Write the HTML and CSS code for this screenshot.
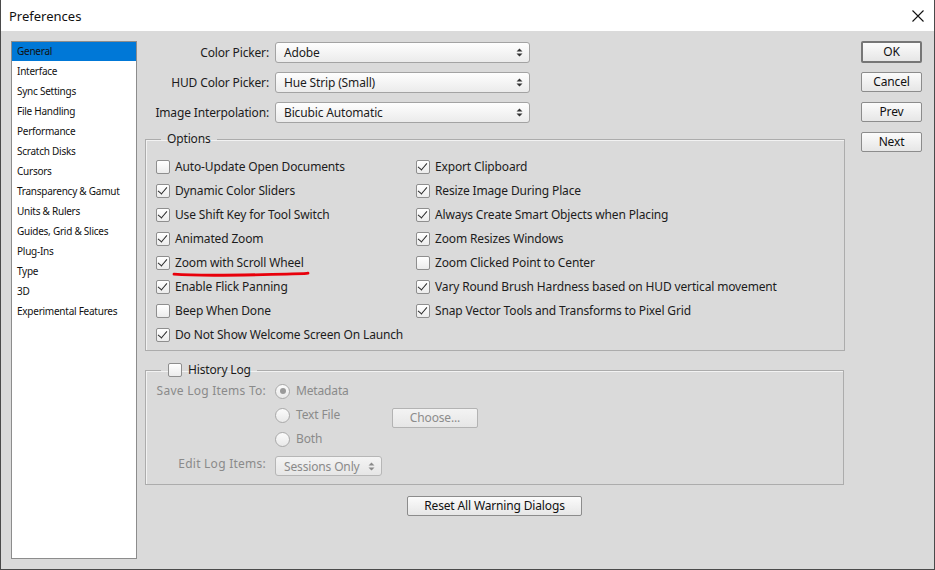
FILE: index.html
```html
<!DOCTYPE html>
<html>
<head>
<meta charset="utf-8">
<link rel="stylesheet" href="styles.css">
</head>
<body>
<div class="window">
  <div class="titlebar">
    <span class="title">Preferences</span>
    <svg class="close" width="12" height="12" viewBox="0 0 12 12"><path d="M0.5 0.5 L11.5 11.5 M11.5 0.5 L0.5 11.5" stroke="#111" stroke-width="1.1" fill="none"/></svg>
  </div>
  <div class="body">
    <ul class="nav">
      <li class="selected">General</li>
      <li>Interface</li>
      <li>Sync Settings</li>
      <li>File Handling</li>
      <li>Performance</li>
      <li>Scratch Disks</li>
      <li>Cursors</li>
      <li>Transparency &amp; Gamut</li>
      <li>Units &amp; Rulers</li>
      <li>Guides, Grid &amp; Slices</li>
      <li>Plug-Ins</li>
      <li>Type</li>
      <li>3D</li>
      <li>Experimental Features</li>
    </ul>

    <div class="main">
      <div class="top-grid">
        <span class="lbl">Color Picker:</span>
        <div class="select"><span>Adobe</span><svg class="arrows" width="7" height="9" viewBox="0 0 7 9"><path d="M3.5 0.5 L6.5 3.5 L0.5 3.5 Z M3.5 8.5 L6.5 5.5 L0.5 5.5 Z" fill="#333"/></svg></div>
        <span class="lbl">HUD Color Picker:</span>
        <div class="select"><span>Hue Strip (Small)</span><svg class="arrows" width="7" height="9" viewBox="0 0 7 9"><path d="M3.5 0.5 L6.5 3.5 L0.5 3.5 Z M3.5 8.5 L6.5 5.5 L0.5 5.5 Z" fill="#333"/></svg></div>
        <span class="lbl">Image Interpolation:</span>
        <div class="select"><span>Bicubic Automatic</span><svg class="arrows" width="7" height="9" viewBox="0 0 7 9"><path d="M3.5 0.5 L6.5 3.5 L0.5 3.5 Z M3.5 8.5 L6.5 5.5 L0.5 5.5 Z" fill="#333"/></svg></div>
      </div>

      <fieldset class="group options">
        <legend>Options</legend>
        <div class="opt-grid">
          <div class="opt"><span class="cb"></span><span class="txt">Auto-Update Open Documents</span></div>
          <div class="opt"><span class="cb on"></span><span class="txt">Dynamic Color Sliders</span></div>
          <div class="opt"><span class="cb on"></span><span class="txt">Use Shift Key for Tool Switch</span></div>
          <div class="opt"><span class="cb on"></span><span class="txt">Animated Zoom</span></div>
          <div class="opt"><span class="cb on"></span><span class="txt marked">Zoom with Scroll Wheel<svg class="scribble" width="142" height="10" viewBox="0 0 142 10"><path d="M2 5.2 C 20 6.6, 60 6.4, 100 5.4 S 132 4.6, 136 4.2" stroke="#e8000b" stroke-width="2.8" fill="none" stroke-linecap="round"/></svg></span></div>
          <div class="opt"><span class="cb on"></span><span class="txt">Enable Flick Panning</span></div>
          <div class="opt"><span class="cb"></span><span class="txt">Beep When Done</span></div>
          <div class="opt"><span class="cb on"></span><span class="txt">Do Not Show Welcome Screen On Launch</span></div>
          <div class="opt"><span class="cb on"></span><span class="txt">Export Clipboard</span></div>
          <div class="opt"><span class="cb on"></span><span class="txt">Resize Image During Place</span></div>
          <div class="opt"><span class="cb on"></span><span class="txt">Always Create Smart Objects when Placing</span></div>
          <div class="opt"><span class="cb on"></span><span class="txt">Zoom Resizes Windows</span></div>
          <div class="opt"><span class="cb"></span><span class="txt">Zoom Clicked Point to Center</span></div>
          <div class="opt"><span class="cb on"></span><span class="txt">Vary Round Brush Hardness based on HUD vertical movement</span></div>
          <div class="opt"><span class="cb on"></span><span class="txt">Snap Vector Tools and Transforms to Pixel Grid</span></div>
        </div>
      </fieldset>

      <fieldset class="group history">
        <legend><span class="cb"></span><span class="txt">History Log</span></legend>
        <div class="hist-grid">
          <span class="lbl dis">Save Log Items To:</span>
          <div class="radio-row"><span class="radio checked"></span><span class="dis">Metadata</span></div>
          <span></span>
          <div class="radio-row"><span class="radio"></span><span class="dis rtxt">Text File</span><button class="btn disabled choose">Choose...</button></div>
          <span></span>
          <div class="radio-row"><span class="radio"></span><span class="dis">Both</span></div>
          <span class="lbl dis edit">Edit Log Items:</span>
          <div class="select small disabled"><span>Sessions Only</span><svg class="arrows" width="7" height="9" viewBox="0 0 7 9"><path d="M3.5 0.5 L6.5 3.5 L0.5 3.5 Z M3.5 8.5 L6.5 5.5 L0.5 5.5 Z" fill="#8a8a8a"/></svg></div>
        </div>
      </fieldset>

      <div class="reset-row"><button class="btn reset">Reset All Warning Dialogs</button></div>
    </div>

    <div class="buttons">
      <button class="btn default">OK</button>
      <button class="btn">Cancel</button>
      <button class="btn">Prev</button>
      <button class="btn">Next</button>
    </div>
  </div>
</div>
</body>
</html>
```

FILE: styles.css
```css
* { box-sizing: border-box; }
html, body { margin: 0; padding: 0; background: #dadada; }
body {
  font-family: "Noto Sans", "Liberation Sans", sans-serif;
  font-size: 12px;
  letter-spacing: -0.15px;
  color: #1c1c1c;
}
.window {
  width: 935px;
  height: 570px;
  border: 1px solid #4a4a4a;
  border-top: none;
  background: #dadada;
  display: flex;
  flex-direction: column;
}
.titlebar {
  height: 31px;
  background: #fff;
  display: flex;
  align-items: center;
  justify-content: space-between;
  padding: 0 9px 0 8px;
  flex: none;
  letter-spacing: 0;
}
.title { font-size: 13px; color: #111; padding-top: 1px; }
.close { margin-right: 1px; }

.body {
  flex: 1;
  display: flex;
  padding: 10px 12px 10px 10px;
}
.nav {
  list-style: none;
  margin: 0;
  padding: 0;
  width: 126px;
  background: #fff;
  border: 1px solid #8c8c8c;
  flex: none;
  font-size: 10px;
  letter-spacing: -0.25px;
  color: #111;
}
.nav li {
  height: 19px;
  line-height: 19px;
  margin-bottom: 1px;
  padding-left: 5px;
  white-space: nowrap;
}
.nav li.selected { background: #0078d7; }

.main {
  width: 700px;
  margin-left: 8px;
  margin-top: 1px;
  flex: none;
}
.top-grid {
  display: grid;
  grid-template-columns: 124px 255px;
  grid-auto-rows: 21px;
  column-gap: 6px;
  row-gap: 9px;
  align-items: center;
}
.lbl { text-align: right; white-space: nowrap; }
.select {
  height: 21px;
  border: 1px solid #a3a3a3;
  border-radius: 3px;
  background: linear-gradient(#fefefe, #ebebeb);
  display: flex;
  align-items: center;
  justify-content: space-between;
  padding: 0 6px 0 8px;
  white-space: nowrap;
}
.select .arrows { flex: none; }

.group {
  margin: 8px 0 0 0;
  border: 1px solid #acacac;
  box-shadow: inset 1px 1px 0 #f2f2f2;
  padding: 8px 0 3px 10px;
  min-width: 0;
}
.group legend {
  margin-left: 5px;
  padding: 0 6px;
  line-height: 16px;
  height: 16px;
}
.opt-grid {
  display: grid;
  grid-template-columns: 260px 1fr;
  grid-template-rows: repeat(8, 24px);
  grid-auto-flow: column;
}
.opt { display: flex; align-items: center; white-space: nowrap; }
.cb {
  width: 14px;
  height: 14px;
  border: 1px solid #8e8e8e;
  border-radius: 2px;
  background: linear-gradient(#ffffff, #ececec);
  flex: none;
  margin-right: 5px;
  position: relative;
}
.cb.on::after {
  content: "";
  position: absolute;
  left: 3px;
  top: 0px;
  width: 4px;
  height: 8px;
  border-right: 1.5px solid #2a2a2a;
  border-bottom: 1.5px solid #2a2a2a;
  transform: rotate(40deg);
  transform-origin: center;
}
.txt { display: inline-block; line-height: 24px; }
.marked { position: relative; }
.scribble { position: absolute; left: -3px; top: 18px; }

.history { width: 699px; margin-top: 11px; padding: 0 0 8px 10px; }
.history legend {
  display: flex;
  align-items: center;
  padding: 0 6px 0 7px;
}
.history legend .cb { margin-right: 6px; }
.history legend .txt { line-height: 16px; }
.hist-grid {
  display: grid;
  grid-template-columns: 110px 1fr;
  grid-template-rows: 24px 24px 24px 26px;
  column-gap: 9px;
  align-items: center;
}
.dis { color: #8a8a8a; }
.lbl.dis { letter-spacing: 0.25px; }
.edit { align-self: start; padding-top: 5px; }
.radio-row { display: flex; align-items: center; height: 24px; }
.radio {
  width: 15px;
  height: 15px;
  border-radius: 50%;
  border: 1px solid #a9a9a9;
  background: linear-gradient(#fbfbfb, #e9e9e9);
  margin-right: 6px;
  flex: none;
  position: relative;
  top: 1px;
}
.radio.checked::after {
  content: "";
  position: absolute;
  left: 3.5px; top: 3.5px;
  width: 6px; height: 6px;
  border-radius: 50%;
  background: #9a9a9a;
}
.rtxt { width: 96px; }
.choose {
  width: 86px;
  height: 20px;
  align-self: flex-start;
  margin-top: 6px;
}
.select.small {
  width: 107px;
  height: 20px;
  align-self: end;
  margin-bottom: 0;
  padding: 0 6px 0 8px;
}
.select.disabled {
  border-color: #b6b6b6;
  color: #8a8a8a;
  background: linear-gradient(#f4f4f4, #e6e6e6);
}

.btn {
  font-family: inherit;
  font-size: 12px;
  letter-spacing: -0.15px;
  color: #111;
  height: 20px;
  padding: 0;
  border: 1px solid #8c8c8c;
  border-radius: 2px;
  background: linear-gradient(#fbfbfb, #e6e6e6);
  line-height: 16px;
}
.btn.disabled {
  color: #8c8c8c;
  border-color: #b3b3b3;
  background: linear-gradient(#f3f3f3, #e6e6e6);
}
.reset-row { display: flex; justify-content: center; margin-top: 11px; }
.reset { width: 175px; margin-right: 1px; }

.buttons {
  margin-left: 16px;
  width: 61px;
  flex: none;
  display: flex;
  flex-direction: column;
  gap: 10px;
}
.buttons .btn { width: 61px; }
.buttons .btn.default {
  height: 22px;
  border: 2px solid #767676;
  margin-bottom: -1px;
}
```
